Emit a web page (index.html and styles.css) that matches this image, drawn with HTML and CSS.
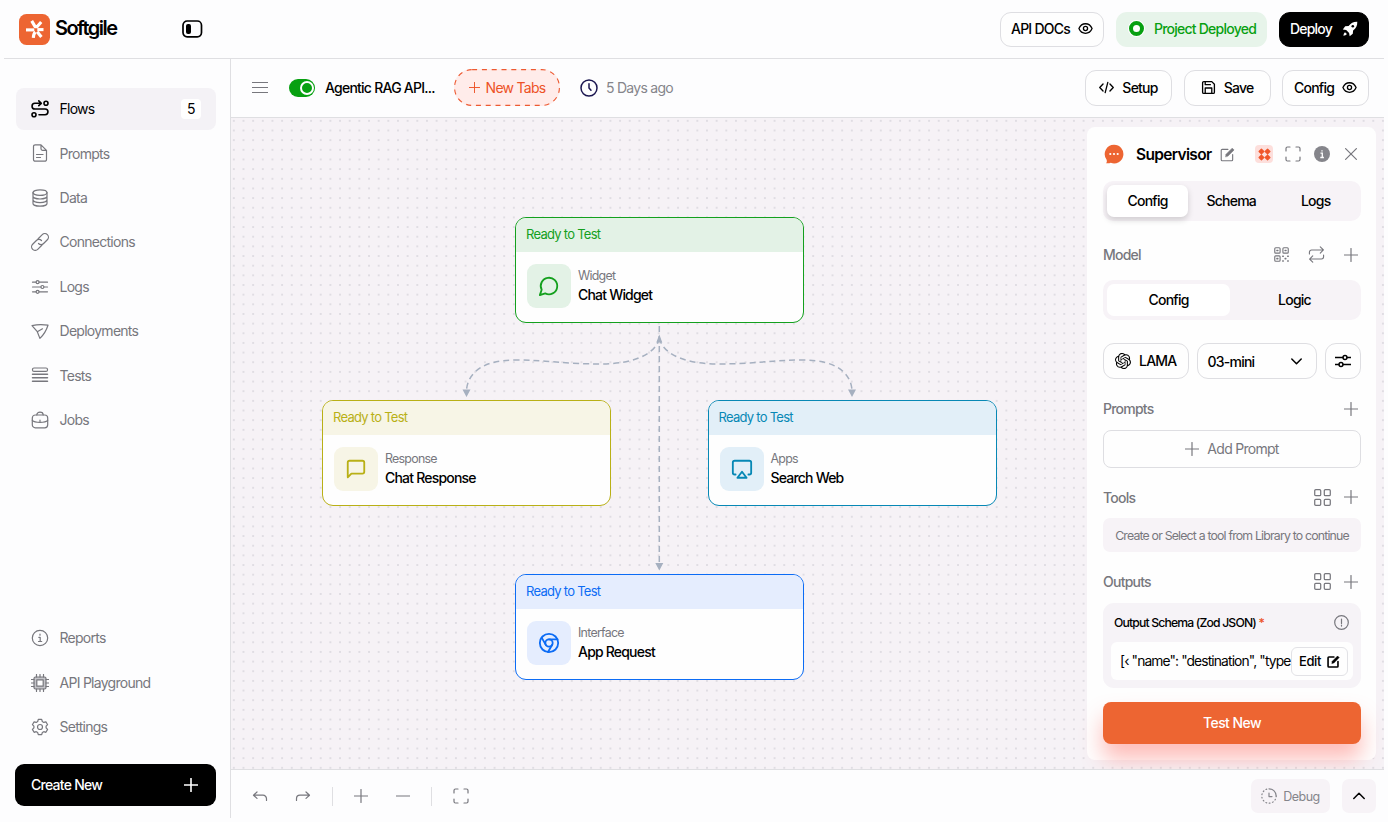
FILE: index.html
```html
<!DOCTYPE html>
<html lang="en">
<head>
    <meta charset="UTF-8">
    <meta name="viewport" content="width=device-width, initial-scale=1.0">
    <title>Softgile</title>
    <link rel="stylesheet" href="styles.css">
</head>
<body>
    <!-- shared icons -->
    <svg class="sprite" xmlns="http://www.w3.org/2000/svg">
        <symbol id="i-plus" viewBox="0 0 14 14"><path d="M7 .5v13M.5 7h13"/></symbol>
        <symbol id="i-eye" viewBox="0 0 16 16"><path d="M1 8C2.400 4.700 5 2.900 8 2.900s5.600 1.800 7 5.100c-1.400 3.300-4 5.100-7 5.100S2.400 11.300 1 8z"/><circle cx="8" cy="8" r="2.200"/></symbol>
        <symbol id="i-grid" viewBox="0.5 0.5 16.500 16.500"><rect x="1.200" y="1.200" width="5.800" height="5.800" rx="1"/><rect x="10.500" y="1.200" width="5.800" height="5.800" rx="1"/><rect x="1.200" y="10.500" width="5.800" height="5.800" rx="1"/><rect x="10.500" y="10.500" width="5.800" height="5.800" rx="1"/></symbol>
        <symbol id="i-full" viewBox="0 0 16 16"><path d="M1 5V2.500A1.500 1.500 0 0 1 2.500 1H5M11 1h2.500A1.500 1.500 0 0 1 15 2.500V5M15 11v2.500a1.500 1.500 0 0 1-1.500 1.500H11M5 15H2.500A1.500 1.500 0 0 1 1 13.500V11"/></symbol>
        <symbol id="i-edit" viewBox="0 0 16 16"><path d="M8.500 2.500H2.300a1 1 0 0 0-1 1v10.200a1 1 0 0 0 1 1h10.200a1 1 0 0 0 1-1V8"/><path d="M6 10.200l.5-2.500 6.500-6.500 2 2-6.500 6.500z" fill="currentColor" stroke-width=".6"/></symbol>
    </svg>

    <div class="app">
        <header class="topbar">
            <div class="brand">
                <svg class="logo" viewBox="0 0 31 31">
                    <rect width="31" height="31" rx="7.500" fill="#ed6532"/>
                    <g fill="none" stroke="#fff" stroke-width="3.100">
                        <path d="M7 15.900h8.300"/>
                        <path d="M12.700 6.900l3.400 5.700h2.200l3.900-4.500" stroke-linejoin="round"/>
                        <path d="M18.300 15.600h6.200"/>
                        <path d="M16.300 18c-1.300 1.200-1.800 3-2 5.800"/>
                        <path d="M18.200 17.700l4.200 5.300"/>
                    </g>
                </svg>
                <span class="brand-name">Softgile</span>
            </div>
            <svg class="icon collapse" viewBox="0 0 21 18"><rect x="1" y="1" width="18.500" height="15.800" rx="4.200" stroke-width="1.700"/><rect x="4" y="4" width="5" height="10" rx="2" fill="currentColor" stroke="none"/></svg>
            <div class="top-actions">
                <button class="btn docs">API DOCs <svg class="icon s15"><use href="#i-eye"/></svg></button>
                <div class="deployed"><span class="ring"></span>Project Deployed</div>
                <button class="btn dark">Deploy
                    <svg class="icon s16" viewBox="0 0 16 16"><path d="M15.300.7C11.500.6 8.800 2 6.600 5L3.200 5.300.8 8.400l3.400.6 2.900 2.900.6 3.400 3.100-2.500.3-3.300c3-2.200 4.300-5 4.200-8.800z" fill="currentColor" stroke="none"/><circle cx="10.800" cy="5.200" r="1.300" fill="#000" stroke="none"/><path d="M3 11.200c-1 .8-1.500 2-1.600 3.500 1.500-.1 2.700-.6 3.500-1.600" fill="currentColor" stroke="none"/></svg>
                </button>
            </div>
        </header>

        <div class="main">
            <aside class="sidebar">
                <nav class="menu">
                    <a class="item active">
                        <svg class="icon s18" viewBox="0 0 18 18"><circle cx="15" cy="3.300" r="2"/><circle cx="3" cy="14.700" r="2"/><path d="M9.500 3.300H3.900a2.800 2.800 0 0 0 0 5.700h10.200a2.850 2.850 0 0 1 0 5.700H8M7.800.9l2.500 2.400-2.500 2.400"/></svg>
                        <span>Flows</span><b class="count">5</b>
                    </a>
                    <a class="item">
                        <svg class="icon s18" viewBox="0 0 18 18"><path d="M2.500 2.500A1.700 1.700 0 0 1 4.200.8H10l5.500 5.500v9.200a1.700 1.700 0 0 1-1.700 1.700H4.200a1.700 1.700 0 0 1-1.700-1.700zM10 .8v4a1.500 1.500 0 0 0 1.500 1.500h4M5.500 10.500h6.500M5.500 13.500h4"/></svg>
                        <span>Prompts</span>
                    </a>
                    <a class="item">
                        <svg class="icon s18" viewBox="0 0 18 18"><ellipse cx="9" cy="3.600" rx="7" ry="2.800"/><path d="M2 3.600v10.800c0 1.500 3.100 2.800 7 2.800s7-1.300 7-2.800V3.600M2 7.200C2 8.700 5.100 10 9 10s7-1.300 7-2.800M2 10.800c0 1.500 3.100 2.800 7 2.800s7-1.300 7-2.800"/></svg>
                        <span>Data</span>
                    </a>
                    <a class="item">
                        <svg class="icon s18" viewBox="0 0 18 18"><g transform="rotate(-45 9 9)"><path d="M8 12.600H2.200a3.600 3.600 0 0 1 0-7.200H7.500A3.600 3.600 0 0 1 11.100 9"/><path d="M10 5.400h5.800a3.600 3.600 0 0 1 0 7.200h-5.300A3.600 3.600 0 0 1 6.900 9"/></g></svg>
                        <span>Connections</span>
                    </a>
                    <a class="item">
                        <svg class="icon s18" viewBox="0 0 18 18"><path d="M1.500 4.200h3.600M8.100 4.200h8.400M1.500 9h8.400M12.900 9h3.600M1.500 13.800h3.600M8.100 13.800h8.400"/><circle cx="6.600" cy="4.200" r="1.500"/><circle cx="11.400" cy="9" r="1.500"/><circle cx="6.600" cy="13.800" r="1.500"/></svg>
                        <span>Logs</span>
                    </a>
                    <a class="item">
                        <svg class="icon s18" viewBox="0 0 18 18"><path d="M1 3.600C6 2.400 12 2.300 17 3.200 15.300 8.500 12.500 13 8.900 16.400L6.300 9.700zM6.300 9.700l5.200-2.900"/></svg>
                        <span>Deployments</span>
                    </a>
                    <a class="item">
                        <svg class="icon s18" viewBox="0 0 18 18"><rect x="1.500" y="2" width="15" height="3.400" rx="1.500"/><path d="M1.500 8.300h15M1.500 11.800h15M1.500 15.300h15" stroke-width="1.500"/></svg>
                        <span>Tests</span>
                    </a>
                    <a class="item">
                        <svg class="icon s18" viewBox="0 0 18 18"><rect x="1.300" y="4" width="15.400" height="12.800" rx="3"/><path d="M5.800 4a3.200 2.800 0 0 1 6.400 0M1.300 9.300c2.500 2.700 12.900 2.700 15.400 0M9 9v1.200"/></svg>
                        <span>Jobs</span>
                    </a>
                </nav>
                <nav class="menu bottom">
                    <a class="item">
                        <svg class="icon s18" viewBox="0 0 18 18"><circle cx="9" cy="9" r="7.700"/><path d="M7.800 8.300H9.200v4M7.500 12.500h3.200M9 5.200v1"/></svg>
                        <span>Reports</span>
                    </a>
                    <a class="item">
                        <svg class="icon s18" viewBox="0 0 18 18"><rect x="3" y="3" width="12" height="12" rx="1.500" fill="#c4c4c9"/><rect x="5.800" y="5.800" width="6.400" height="6.400" fill="#fdfdfe"/><path d="M5.500 3V.5M9 3V.5M12.500 3V.5M5.500 17.500V15M9 17.500V15M12.500 17.500V15M3 5.500H.5M3 9H.5M3 12.500H.5M17.500 5.500H15M17.500 9H15M17.500 12.500H15"/></svg>
                        <span>API Playground</span>
                    </a>
                    <a class="item">
                        <svg class="icon s18" viewBox="0 0 18 18"><circle cx="9" cy="9" r="2.500"/><path d="M7.300 1.400h3.400l.6 2.100 1.500.9 2.100-.6 1.700 2.900-1.500 1.500v1.700l1.500 1.500-1.700 2.900-2.100-.6-1.500.9-.6 2.100H7.300l-.6-2.100-1.500-.9-2.100.6-1.700-2.900 1.500-1.500V8.200L1.400 6.700l1.700-2.900 2.100.6 1.500-.9z"/></svg>
                        <span>Settings</span>
                    </a>
                </nav>
                <button class="create">Create New <svg class="icon s14"><use href="#i-plus"/></svg></button>
            </aside>

            <section class="workspace">
                <div class="toolbar">
                    <svg class="icon burger" viewBox="0 0 16 13"><path d="M0 1.500h16M0 6.500h16M0 11.500h16"/></svg>
                    <span class="switch"><i></i></span>
                    <span class="flow-name">Agentic RAG API...</span>
                    <button class="new-tab">
                        <svg viewBox="0 0 106 37" class="dash"><rect x=".6" y=".6" width="104.800" height="35.800" rx="17.500"/></svg>
                        <svg class="icon s11"><use href="#i-plus"/></svg>New Tabs
                    </button>
                    <svg class="icon clock" viewBox="0 0 18 18"><circle cx="9" cy="9" r="8"/><path d="M9 4.800V9l2 2.300"/></svg>
                    <span class="ago">5 Days ago</span>
                    <div class="tool-actions">
                        <button class="btn"><svg class="icon s15" viewBox="0 0 16 16"><path d="M4.300 4.300L.8 8l3.500 3.700M11.700 4.300L15.200 8l-3.500 3.700M9.400 2.500L6.600 13.500"/></svg>Setup</button>
                        <button class="btn"><svg class="icon s15" viewBox="0 0 16 16"><path d="M1.700 3a1.300 1.300 0 0 1 1.300-1.300h8.500l2.800 2.800V13a1.300 1.300 0 0 1-1.300 1.300H3A1.300 1.300 0 0 1 1.700 13zM4.500 14V8.500h7V14M4.500 2v3h5.500"/></svg>Save</button>
                        <button class="btn">Config <svg class="icon s15"><use href="#i-eye"/></svg></button>
                    </div>
                </div>

                <div class="canvas">
                    <svg class="edges" width="856" height="651" viewBox="231 118 856 651">
                        <g fill="none" stroke="#a6b0c0" stroke-width="1.500" stroke-dasharray="6 4">
                            <path d="M659.300 326V564"/>
                            <path d="M659.300 338C655 357 627 364 602 364C565 364 545 360 515 360C484 360 468 372 466.500 390"/>
                            <path d="M659.300 338C663.600 357 691.600 364 716.600 364C753.600 364 773.600 360 803.600 360C834.600 360 850.600 372 852 390"/>
                        </g>
                        <g fill="#a6b0c0">
                            <path d="M655.300 563h8l-4 7.500zM462.500 389.500h8l-4 7.500zM848 389.500h8l-4 7.500zM659.300 334.500l3 8h-6z"/>
                        </g>
                    </svg>

                    <div class="node green" style="left: 284px; top: 99px">
                        <div class="node-head">Ready to Test</div>
                        <div class="node-body">
                            <div class="node-icon"><svg class="icon" viewBox="0 0 24 24"><path d="M7.900 20A9 9 0 1 0 4 16.100L2 22z"/></svg></div>
                            <div><p>Widget</p><h4>Chat Widget</h4></div>
                        </div>
                    </div>
                    <div class="node yellow" style="left: 91px; top: 282px">
                        <div class="node-head">Ready to Test</div>
                        <div class="node-body">
                            <div class="node-icon"><svg class="icon" viewBox="0 0 24 24"><path d="M21 15a2 2 0 0 1-2 2H7l-4 4V5a2 2 0 0 1 2-2h14a2 2 0 0 1 2 2z"/></svg></div>
                            <div><p>Response</p><h4>Chat Response</h4></div>
                        </div>
                    </div>
                    <div class="node cyan" style="left: 476.5px; top: 282px">
                        <div class="node-head">Ready to Test</div>
                        <div class="node-body">
                            <div class="node-icon"><svg class="icon" viewBox="0 0 24 24"><path d="M5 18H4a2 2 0 0 1-2-2V5a2 2 0 0 1 2-2h16a2 2 0 0 1 2 2v11a2 2 0 0 1-2 2h-1M12 15l5 6.500H7z"/></svg></div>
                            <div><p>Apps</p><h4>Search Web</h4></div>
                        </div>
                    </div>
                    <div class="node blue" style="left: 284px; top: 456px">
                        <div class="node-head">Ready to Test</div>
                        <div class="node-body">
                            <div class="node-icon"><svg class="icon" viewBox="0 0 24 24"><circle cx="12" cy="12" r="10"/><circle cx="12" cy="12" r="4"/><path d="M21.200 8H12M4 6.100L8.500 14M10.900 21.900L15.500 14"/></svg></div>
                            <div><p>Interface</p><h4>App Request</h4></div>
                        </div>
                    </div>

                    <div class="panel">
                        <div class="panel-head">
                            <svg class="bubble" viewBox="0 0 20 20"><path d="M10 .8a9.300 9.300 0 1 1-3.200 18c-1.500.6-3.200.7-4.700.4.900-1 1-2.200.4-3.700A9.300 9.300 0 0 1 10 .8z" fill="#ed6532"/><g fill="#fff"><circle cx="6.300" cy="10" r="1.100"/><circle cx="10" cy="10" r="1.100"/><circle cx="13.700" cy="10" r="1.100"/></g></svg>
                            <h3>Supervisor</h3>
                            <svg class="icon s15"><use href="#i-edit"/></svg>
                            <div class="head-tools">
                                <span class="chip"><svg viewBox="0 0 14 14"><g fill="#f0562a" stroke="#f0562a" stroke-width="1.400" stroke-linejoin="round"><path d="M3.700 1.200l2.500 2.500-2.500 2.500-2.500-2.500zM10.300 1.200l2.500 2.500-2.500 2.500-2.500-2.500zM3.700 7.800l2.500 2.500-2.500 2.500-2.500-2.500zM10.300 7.800l2.500 2.500-2.500 2.500-2.500-2.500z"/></g></svg></span>
                                <svg class="icon s16"><use href="#i-full"/></svg>
                                <svg class="s16" viewBox="0 0 16 16"><circle cx="8" cy="8" r="8" fill="#85858b"/><path d="M6.500 7.200h1.800v4M6.300 11.500h3.600M8 4.200v1.300" fill="none" stroke="#fff" stroke-width="1.300"/></svg>
                                <svg class="icon s12" viewBox="0 0 12 12"><path d="M.6.600l10.800 10.800M11.400.6L.6 11.400"/></svg>
                            </div>
                        </div>

                        <div class="tabs three"><span class="on">Config</span><span>Schema</span><span>Logs</span></div>

                        <div class="row model">
                            <h5>Model</h5>
                            <svg class="icon s15" viewBox="0 0 16 16"><rect x=".8" y=".8" width="5.700" height="5.700" rx="1"/><rect x="9.500" y=".8" width="5.700" height="5.700" rx="1"/><rect x=".8" y="9.500" width="5.700" height="5.700" rx="1"/><path d="M3.100 3.600h1M11.800 3.600h1M3.100 12.400h1M9.300 9.800h.6M14.600 9.800h.6M11.900 12.400h.7M9.300 15h.6M14.600 15h.6" stroke-width="1.600"/></svg>
                            <svg class="icon s17" viewBox="0 0 18 18"><path d="M1.500 8.500V6.500a2.300 2.300 0 0 1 2.300-2.300h12.200M13 .9l3.300 3.300L13 7.500M16.500 9.500v2a2.300 2.300 0 0 1-2.300 2.300H2M5 10.500l-3.300 3.300L5 17.100"/></svg>
                            <svg class="icon s14"><use href="#i-plus"/></svg>
                        </div>

                        <div class="tabs two"><span class="on">Config</span><span>Logic</span></div>

                        <div class="selects">
                            <button class="btn lama">
                                <svg class="s16" viewBox="0 0 24 24"><path fill="#000" d="M22.282 9.821a5.985 5.985 0 0 0-.516-4.910 6.046 6.046 0 0 0-6.510-2.900A6.065 6.065 0 0 0 4.981 4.182a5.985 5.985 0 0 0-3.998 2.900 6.046 6.046 0 0 0 .743 7.097 5.980 5.980 0 0 0 .511 4.911 6.051 6.051 0 0 0 6.515 2.900A5.985 5.985 0 0 0 13.260 24a6.056 6.056 0 0 0 5.772-4.206 5.989 5.989 0 0 0 3.998-2.900 6.056 6.056 0 0 0-.748-7.073zm-9.022 12.608a4.476 4.476 0 0 1-2.876-1.041l.142-.080 4.778-2.758a.795.795 0 0 0 .393-.681v-6.737l2.020 1.169a.071.071 0 0 1 .038.052v5.583a4.504 4.504 0 0 1-4.495 4.494zm-9.661-4.125a4.471 4.471 0 0 1-.535-3.014l.142.085 4.783 2.758a.771.771 0 0 0 .781 0l5.843-3.369v2.332a.080.080 0 0 1-.033.062L9.740 19.950a4.499 4.499 0 0 1-6.141-1.646zM2.341 7.896a4.485 4.485 0 0 1 2.366-1.973V11.600a.766.766 0 0 0 .388.677l5.814 3.354-2.020 1.169a.076.076 0 0 1-.071 0l-4.830-2.787A4.504 4.504 0 0 1 2.341 7.872zm16.596 3.856L13.104 8.364 15.119 7.200a.076.076 0 0 1 .071 0l4.830 2.791a4.494 4.494 0 0 1-.677 8.104v-5.677a.790.790 0 0 0-.407-.667zm2.011-3.023l-.142-.085-4.774-2.782a.776.776 0 0 0-.785 0L9.409 9.230V6.897a.066.066 0 0 1 .028-.062l4.830-2.787a4.499 4.499 0 0 1 6.680 4.660zM8.307 12.863l-2.020-1.164a.080.080 0 0 1-.038-.057V6.074a4.499 4.499 0 0 1 7.376-3.454l-.142.081L8.704 5.459a.795.795 0 0 0-.393.681zm1.098-2.365l2.602-1.500 2.607 1.500v2.999l-2.597 1.500-2.607-1.500z"/></svg>LAMA
                            </button>
                            <button class="btn mini">03-mini <svg class="icon s11" viewBox="0 0 11 11"><path d="M.8 3l4.700 4.700L10.200 3" stroke-width="1.500"/></svg></button>
                            <button class="btn sliders"><svg class="icon s16" viewBox="0 0 16 16"><path d="M0 4.500h8M12 4.500h4M0 11.500h4M8 11.500h8"/><circle cx="10" cy="4.500" r="2"/><circle cx="6" cy="11.500" r="2"/></svg></button>
                        </div>

                        <div class="row prompts"><h5>Prompts</h5><svg class="icon s14"><use href="#i-plus"/></svg></div>
                        <button class="add-prompt"><svg class="icon s14"><use href="#i-plus"/></svg>Add Prompt</button>

                        <div class="row tools"><h5>Tools</h5><svg class="icon s17"><use href="#i-grid"/></svg><svg class="icon s14"><use href="#i-plus"/></svg></div>
                        <div class="hint">Create or Select a tool from Library to continue</div>

                        <div class="row outputs"><h5>Outputs</h5><svg class="icon s17"><use href="#i-grid"/></svg><svg class="icon s14"><use href="#i-plus"/></svg></div>
                        <div class="schema">
                            <div class="schema-head">
                                <span>Output Schema (Zod JSON) <em>*</em></span>
                                <svg class="icon s15" viewBox="0 0 15 15"><circle cx="7.500" cy="7.500" r="6.800"/><path d="M7.500 4v4.400M7.500 10v1.100"/></svg>
                            </div>
                            <div class="schema-field">
                                <code>[‹ "name": "destination", "type</code>
                                <button class="edit">Edit <svg class="icon s13"><use href="#i-edit"/></svg></button>
                            </div>
                        </div>
                        <button class="test">Test New</button>
                    </div>
                </div>

                <footer class="bottombar">
                    <svg class="icon s16" viewBox="0 0 16 16"><path d="M5 4L1.500 7.200 5 10.400M1.500 7.200H11a3.500 3.500 0 0 1 3.500 3.500v1.800"/></svg>
                    <svg class="icon s16" viewBox="0 0 16 16"><path d="M11 4l3.500 3.200L11 10.400M14.500 7.200H5a3.500 3.500 0 0 0-3.500 3.500v1.800"/></svg>
                    <i class="sep"></i>
                    <svg class="icon s14"><use href="#i-plus"/></svg>
                    <svg class="icon s14" viewBox="0 0 14 14"><path d="M.5 7h13"/></svg>
                    <i class="sep"></i>
                    <svg class="icon s16"><use href="#i-full"/></svg>
                    <div class="debug"><svg class="icon s16" viewBox="0 0 16 16"><path d="M8 .8A7.200 7.200 0 0 1 15.200 8"/><path d="M15.200 8A7.200 7.200 0 1 1 8 .8" stroke-dasharray=".8 2.600"/><path d="M8 5V8.600h3"/></svg>Debug</div>
                    <div class="up"><svg class="icon s12" viewBox="0 0 12 12"><path d="M.8 8.500L6 3.300l5.200 5.200" stroke-width="1.500"/></svg></div>
                </footer>
            </section>
        </div>
    </div>
</body>
</html>
```

FILE: styles.css
```css
* {
    box-sizing: border-box;
}

body {
    margin: 0;
    background: #fdfdfe;
    color: #000;
    font-family: Inter, "Liberation Sans", sans-serif;
    font-size: 14px;
    letter-spacing: -0.052em;
    overflow: hidden;
}

h3, h4, h5, p {
    margin: 0;
}

h4, h5, .btn, .tabs, .deployed, .flow-name {
    font-size: 14px;
    font-weight: 450;
    letter-spacing: -0.76px;
}

button {
    font: inherit;
    letter-spacing: inherit;
    color: inherit;
    padding: 0;
    border: none;
    background: none;
}

.sprite {
    position: absolute;
    width: 0;
    height: 0;
}

.icon {
    fill: none;
    stroke: currentColor;
    stroke-width: 1.2;
    stroke-linecap: round;
    stroke-linejoin: round;
    flex: none;
}

.s11 { width: 11px; height: 11px; }
.s12 { width: 12px; height: 12px; }
.s13 { width: 13px; height: 13px; }
.s14 { width: 14px; height: 14px; }
.s15 { width: 15px; height: 15px; }
.s16 { width: 16px; height: 16px; }
.s17 { width: 17px; height: 17px; }
.s18 { width: 18px; height: 18px; }

.app {
    display: flex;
    flex-direction: column;
    height: 818px;
    margin: 0 4px;
}

/* top bar */
.topbar {
    display: flex;
    align-items: center;
    height: 59px;
    padding: 0 15px;
    border-bottom: 1px solid #dfdfe2;
}

.brand {
    display: flex;
    align-items: center;
    gap: 5px;
    width: 163px;
}

.logo {
    width: 31px;
    height: 31px;
}

.brand-name {
    font-size: 20px;
    font-weight: 600;
    letter-spacing: -0.078em;
    margin-top: -3px;
}

.collapse {
    width: 21px;
    height: 18px;
}

.top-actions {
    display: flex;
    gap: 12px;
    margin-left: auto;
}

.tool-actions {
    display: flex;
    gap: 11.5px;
    margin-left: auto;
}

.btn {
    display: flex;
    align-items: center;
    justify-content: center;
    gap: 8px;
    height: 36px;
    width: 87px;
    padding-bottom: 1px;
    border: 1px solid #dedee2;
    border-radius: 11px;
    background: #fefefe;
}

.btn .icon {
    stroke-width: 1.4;
}

.top-actions .btn {
    height: 35px;
}

.btn.docs {
    width: 104px;
}

.btn.dark {
    width: 90px;
    gap: 10px;
    background: #000;
    border-color: #000;
    color: #fff;
}

.deployed {
    display: flex;
    align-items: center;
    justify-content: center;
    gap: 10px;
    width: 151px;
    height: 35px;
    padding: 0 0 1px 2px;
    border-radius: 11px;
    background: #e7f4ea;
    color: #07a011;
}

.ring {
    width: 15px;
    height: 15px;
    border: 4.5px solid #07a011;
    border-radius: 50%;
    background: #fff;
    box-shadow: 0 0 0 1px #fff;
}

/* sidebar */
.main {
    display: flex;
    flex: 1;
    min-height: 0;
}

.sidebar {
    display: flex;
    flex-direction: column;
    width: 227px;
    padding: 29px 14px 12px 12px;
    border-right: 1px solid #dfdfe2;
}

.menu {
    display: flex;
    flex-direction: column;
    gap: 2.4px;
}

.menu.bottom {
    margin-top: auto;
    margin-bottom: 16px;
}

.item {
    display: flex;
    align-items: center;
    gap: 10.5px;
    height: 42px;
    padding: 0 15px;
    border-radius: 8px;
    color: #77777d;
}

.item span {
    margin-top: -0.5px;
}

.item.active {
    background: #f4f2f6;
    color: #000;
}

.item.active .icon {
    stroke-width: 1.6;
}

.count {
    margin-left: auto;
    width: 20px;
    height: 20px;
    line-height: 20px;
    border-radius: 4px;
    background: #fff;
    text-align: center;
    font-weight: 400;
}

.create {
    display: flex;
    align-items: center;
    justify-content: space-between;
    height: 42px;
    flex: none;
    margin-left: -1px;
    padding: 0 18px 1px 16px;
    border-radius: 9px;
    background: #000;
    color: #fff;
    font-size: 14px;
    font-weight: 500;
}

.create .icon {
    stroke-width: 1.6;
}

/* workspace */
.workspace {
    flex: 1;
    display: flex;
    flex-direction: column;
    min-width: 0;
}

.toolbar {
    display: flex;
    align-items: center;
    height: 59px;
    padding: 0 15px 1px 21px;
    border-bottom: 1px solid #dfdfe2;
}

.burger {
    width: 16px;
    height: 13px;
    margin-right: 21px;
    color: #77777d;
}

.switch {
    display: flex;
    justify-content: flex-end;
    align-items: center;
    width: 26px;
    height: 18px;
    padding-right: 1.5px;
    border-radius: 9px;
    background: #07a011;
}

.switch i {
    width: 14px;
    height: 14px;
    border: 2.5px solid #fff;
    border-radius: 50%;
}

.flow-name {
    width: 129px;
    margin-left: 10px;
}

.new-tab {
    position: relative;
    display: flex;
    align-items: center;
    justify-content: center;
    gap: 6px;
    width: 106px;
    height: 37px;
    border-radius: 18px;
    background: #ffecea;
    color: #ed5226;
}

/* dashed outline of the pill */
.dash {
    position: absolute;
    inset: 0;
    fill: none;
    stroke: #ed5a32;
    stroke-width: 1.1;
    stroke-dasharray: 5 4.8;
}

.clock {
    width: 18px;
    height: 18px;
    margin: 0 8px 0 20px;
    color: #1b1650;
    stroke-width: 1.5;
}

.ago {
    color: #85858b;
}

.canvas {
    position: relative;
    flex: 1;
    background-color: #f6f2f6;
    background-image: radial-gradient(circle, #e0dde3 0.9px, transparent 1.3px);
    background-size: 9.66px 9.66px;
    background-position: -2px -2px;
    overflow: hidden;
}

.edges {
    position: absolute;
    left: 0;
    top: 0;
}

.node {
    position: absolute;
    width: 289px;
    height: 106px;
    border: 1.3px solid var(--c);
    border-radius: 11px;
    background: #fefefe;
    overflow: hidden;
}

.green { --c: #14a01e; --bg: #e3f2e6; }
.yellow { --c: #b9b016; --bg: #f7f5e6; }
.cyan { --c: #0788b5; --bg: #e2eff8; }
.blue { --c: #0c6cf5; --bg: #e5edfe; }

.node-head {
    height: 34px;
    line-height: 33px;
    padding-left: 10px;
    background: var(--bg);
    color: var(--c);
    font-size: 13px;
}

.node-body {
    display: flex;
    align-items: center;
    gap: 7px;
    padding: 12px 11px;
}

.node-icon {
    display: flex;
    align-items: center;
    justify-content: center;
    width: 44px;
    height: 44px;
    border-radius: 9px;
    background: var(--bg);
    color: var(--c);
}

.node-icon .icon {
    width: 22px;
    height: 22px;
    stroke-width: 2;
}

.node p {
    font-size: 12.4px;
    line-height: 18px;
    color: #77777d;
}

.node h4 {
    line-height: 20px;
    font-weight: 500;
    letter-spacing: -0.8px;
}

/* config panel */
.panel {
    position: absolute;
    right: 8px;
    top: 9px;
    width: 289px;
    height: 633px;
    padding: 0 15px 0 16px;
    border-radius: 8px;
    background: #fefefe;
}

.panel-head {
    display: flex;
    align-items: center;
    height: 54px;
    color: #77777d;
}

.bubble {
    width: 20px;
    height: 20px;
    margin: 0 12px 0 1px;
}

.panel-head h3 {
    margin-right: 9px;
    color: #000;
    font-size: 15.5px;
    font-weight: 600;
    letter-spacing: -0.043em;
}

.head-tools {
    display: flex;
    align-items: center;
    gap: 13px;
    margin-left: auto;
    padding-right: 4px;
}

.head-tools .s12 {
    margin-left: 2px;
}

.chip {
    display: flex;
    align-items: center;
    justify-content: center;
    width: 18px;
    height: 18px;
    margin-right: -1px;
    border-radius: 4px;
    background: #fddfdc;
}

.chip svg {
    width: 13px;
    height: 13px;
}

.tabs {
    display: flex;
    height: 40px;
    padding: 4px;
    border-radius: 10px;
    background: #f7f3f7;
}

.tabs span {
    flex: 1;
    display: flex;
    align-items: center;
    justify-content: center;
    padding-bottom: 1px;
}

.tabs span:not(.on) {
    padding-left: 2px;
}

.tabs .on {
    border-radius: 7px;
    background: #fff;
}

.three .on {
    flex: none;
    width: 81px;
    box-shadow: 0 3px 6px rgba(0, 0, 0, 0.16);
}

.two .on {
    flex: none;
    width: 123px;
}

.row {
    display: flex;
    align-items: center;
    gap: 13px;
    padding-right: 3px;
    color: #77777d;
}

.row h5 {
    margin-right: auto;
}

.row.model {
    height: 59px;
    gap: 19px;
    padding-top: 8px;
}

.selects {
    display: flex;
    gap: 8px;
    margin-top: 23px;
}

.btn.lama {
    width: 85.5px;
}

.btn.mini {
    width: 120px;
    justify-content: space-between;
    padding: 0 14px 0 10px;
}

.btn.sliders {
    width: 36.5px;
}

.row.prompts {
    height: 51px;
    padding-top: 8px;
}

.add-prompt {
    display: flex;
    align-items: center;
    justify-content: center;
    gap: 8px;
    width: 100%;
    height: 38px;
    padding-bottom: 1px;
    border: 1px solid #dedee2;
    border-radius: 8px;
    color: #77777d;
}

.row.tools {
    height: 50px;
    padding-top: 8px;
}

.hint {
    height: 34px;
    line-height: 35px;
    border-radius: 7px;
    background: #f7f3f7;
    color: #77777d;
    font-size: 12.3px;
    letter-spacing: -0.066em;
    text-align: center;
    white-space: nowrap;
}

.row.outputs {
    height: 51px;
    padding-top: 8px;
}

.schema {
    height: 85px;
    padding: 0 8px;
    border-radius: 11px;
    background: #f6f3f7;
}

.schema-head {
    display: flex;
    align-items: center;
    justify-content: space-between;
    height: 39px;
    padding: 0 4px 0 3px;
    font-size: 12.2px;
    font-weight: 500;
    letter-spacing: -0.068em;
}

.schema-head .icon {
    color: #77777d;
}

.schema-head em {
    color: #ed5226;
    font-style: normal;
}

.schema-field {
    display: flex;
    align-items: center;
    height: 38px;
    padding: 0 5px 0 9px;
    border-radius: 6px;
    background: #fefefe;
}

.schema-field code {
    flex: 1;
    min-width: 0;
    overflow: hidden;
    white-space: nowrap;
    font-family: inherit;
    font-size: 13.8px;
    letter-spacing: -0.063em;
}

.edit {
    display: flex;
    align-items: center;
    justify-content: center;
    gap: 6px;
    width: 57px;
    height: 29px;
    border: 1px solid #e2e2e6;
    border-radius: 6px;
    font-size: 13px;
    font-weight: 500;
    letter-spacing: -0.03em;
}

.edit .icon {
    stroke-width: 2;
}

.test {
    width: 100%;
    height: 42px;
    margin-top: 14px;
    padding-bottom: 1px;
    border-radius: 8px;
    background: #ed6532;
    color: #fff;
    font-size: 14px;
    font-weight: 500;
    letter-spacing: -0.04em;
    box-shadow: 0 15px 22px rgba(255, 90, 80, 0.4);
}

/* bottom bar */
.bottombar {
    display: flex;
    align-items: center;
    height: 49px;
    padding: 4px 8px 0 21px;
    border-top: 1px solid #dfdfe2;
    color: #77777d;
}

.bottombar > .icon + .icon {
    margin-left: 26.5px;
}

.bottombar > .s14 + .s14 {
    margin-left: 28px;
}

.sep {
    width: 1px;
    height: 19px;
    margin: 0 21px;
    background: #dfdfe2;
}

.debug {
    display: flex;
    align-items: center;
    justify-content: center;
    gap: 6px;
    width: 79px;
    height: 34px;
    margin-left: auto;
    border-radius: 7px;
    background: #f7f3f7;
    color: #85858b;
    font-size: 12.5px;
    letter-spacing: -0.04em;
}

.up {
    display: flex;
    align-items: center;
    justify-content: center;
    width: 34px;
    height: 34px;
    margin-left: 12px;
    border-radius: 7px;
    background: #f7f3f7;
    color: #000;
}
```
